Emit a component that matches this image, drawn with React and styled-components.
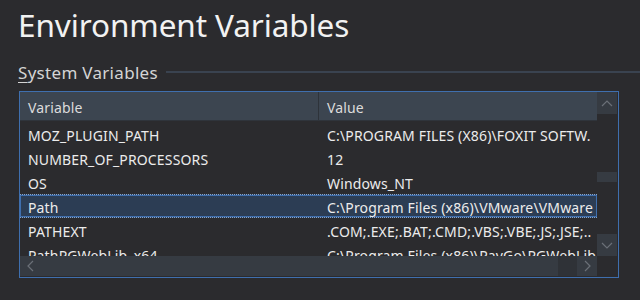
import React from "react";
import styled, { createGlobalStyle } from "styled-components";

const GlobalStyle = createGlobalStyle`
  html, body {
    margin: 0;
    background: #2b2b2e;
  }
  body {
    font-family: "Noto Sans", "Open Sans", sans-serif;
    color: #e6e6e6;
  }
`;

const rows = [
  { name: "MOZ_PLUGIN_PATH", value: "C:\\PROGRAM FILES (X86)\\FOXIT SOFTW." },
  { name: "NUMBER_OF_PROCESSORS", value: "12" },
  { name: "OS", value: "Windows_NT" },
  { name: "Path", value: "C:\\Program Files (x86)\\VMware\\VMware", selected: true },
  { name: "PATHEXT", value: ".COM;.EXE;.BAT;.CMD;.VBS;.VBE;.JS;.JSE;.." },
  { name: "PathPGWebLib_x64", value: "C:\\Program Files (x86)\\PayGo\\PGWebLib" },
];

const Chevron = ({ dir }) => {
  const paths = {
    up: "M1 6 L6 1 L11 6",
    down: "M1 1 L6 6 L11 1",
    left: "M6 1 L1 6 L6 11",
    right: "M1 1 L6 6 L1 11",
  };
  const vertical = dir === "up" || dir === "down";
  return (
    <svg width={vertical ? 12 : 7} height={vertical ? 7 : 12} viewBox={vertical ? "0 0 12 7" : "0 0 7 12"}>
      <path d={paths[dir]} fill="none" stroke="#6b7078" strokeWidth="1.2" />
    </svg>
  );
};

const App = () => {
  return (
    <Page>
      <GlobalStyle />
      <Title>Environment Variables</Title>
      <GroupLabel>
        <span><u>S</u>ystem Variables</span>
        <Rule />
      </GroupLabel>
      <Frame>
        <ListArea>
          <HeaderRow>
            <HeaderCell>Variable</HeaderCell>
            <HeaderCell divider>Value</HeaderCell>
          </HeaderRow>
          <Body>
            {rows.map((r) => (
              <Row key={r.name} selected={r.selected}>
                <Cell>{r.name}</Cell>
                <Cell value>{r.value}</Cell>
              </Row>
            ))}
          </Body>
        </ListArea>
        <VScroll>
          <ArrowButton tall>
            <Chevron dir="up" />
          </ArrowButton>
          <Track>
            <VThumb />
          </Track>
          <ArrowButton tall>
            <Chevron dir="down" />
          </ArrowButton>
        </VScroll>
        <HScroll>
          <ArrowButton>
            <Chevron dir="left" />
          </ArrowButton>
          <HThumb />
          <ArrowButton>
            <Chevron dir="right" />
          </ArrowButton>
        </HScroll>
        <Corner />
      </Frame>
    </Page>
  );
};

const Page = styled.div`
  width: 640px;
  height: 300px;
  box-sizing: border-box;
  padding: 2px 21px 0 19px;
  overflow: hidden;
`;

const Title = styled.h1`
  margin: 0 0 0 -1px;
  font-weight: 400;
  font-size: 31.5px;
  line-height: 46px;
  color: #f2f2f2;
  letter-spacing: -0.1px;
`;

const GroupLabel = styled.div`
  display: flex;
  align-items: center;
  gap: 8px;
  margin: 13px 0 0 -1px;
  height: 22px;
  font-size: 17px;
  letter-spacing: 0.3px;
  color: #d4d4d4;
  white-space: nowrap;

  u {
    text-underline-offset: 3px;
  }
`;

const Rule = styled.div`
  flex: 1;
  height: 2px;
  margin-right: -21px;
  background: #3a4350;
`;

const Frame = styled.div`
  margin-top: 8px;
  width: 600px;
  height: 187px;
  box-sizing: border-box;
  border: 1px solid #3f6fae;
  display: grid;
  grid-template-columns: 577px 20px;
  grid-template-rows: 164px 20px;
  background: #2b2b2e;
`;

const ListArea = styled.div`
  overflow: hidden;
  font-size: 14px;
  letter-spacing: 0.15px;
`;

const HeaderRow = styled.div`
  display: grid;
  grid-template-columns: 298px 279px;
  height: 28px;
  background: #3c4550;
  border-bottom: 1px solid #2f343b;
`;

const HeaderCell = styled.div`
  display: flex;
  align-items: center;
  padding: 3px 0 0 8px;
  color: #dcdcdc;
  border-left: ${(p) => (p.divider ? "1px solid #2e333a" : "none")};
`;

const Body = styled.div`
  padding-top: 1px;
`;

const Row = styled.div`
  display: grid;
  grid-template-columns: 298px 279px;
  height: 24px;
  padding-top: 2px;
  box-sizing: border-box;
  background: ${(p) => (p.selected ? "#2c3d54" : "transparent")};
  border-top: 1px ${(p) => (p.selected ? "dotted #8aa6cc" : "solid transparent")};
  border-bottom: 1px ${(p) => (p.selected ? "dotted #8aa6cc" : "solid transparent")};
  box-shadow: ${(p) => (p.selected ? "inset 0 0 0 1px #3f6fae" : "none")};
`;

const Cell = styled.div`
  display: flex;
  align-items: center;
  padding-left: ${(p) => (p.value ? "9px" : "8px")};
  white-space: nowrap;
  overflow: hidden;
  color: #ececec;
`;

const VScroll = styled.div`
  display: flex;
  flex-direction: column;
  background: #2b2b2e;
`;

const ArrowButton = styled.div`
  display: flex;
  align-items: center;
  justify-content: center;
  flex: none;
  width: 20px;
  height: ${(p) => (p.tall ? "22px" : "20px")};
  background: #363b42;
`;

const Track = styled.div`
  flex: 1;
  padding-top: 58px;
`;

const VThumb = styled.div`
  height: 10px;
  background: #363b42;
`;

const HScroll = styled.div`
  display: flex;
  background: #2f3237;
`;

const HThumb = styled.div`
  width: 518px;
  background: #363b42;
  margin-right: auto;
`;

const Corner = styled.div`
  background: #2b2b2e;
`;

export default App;
